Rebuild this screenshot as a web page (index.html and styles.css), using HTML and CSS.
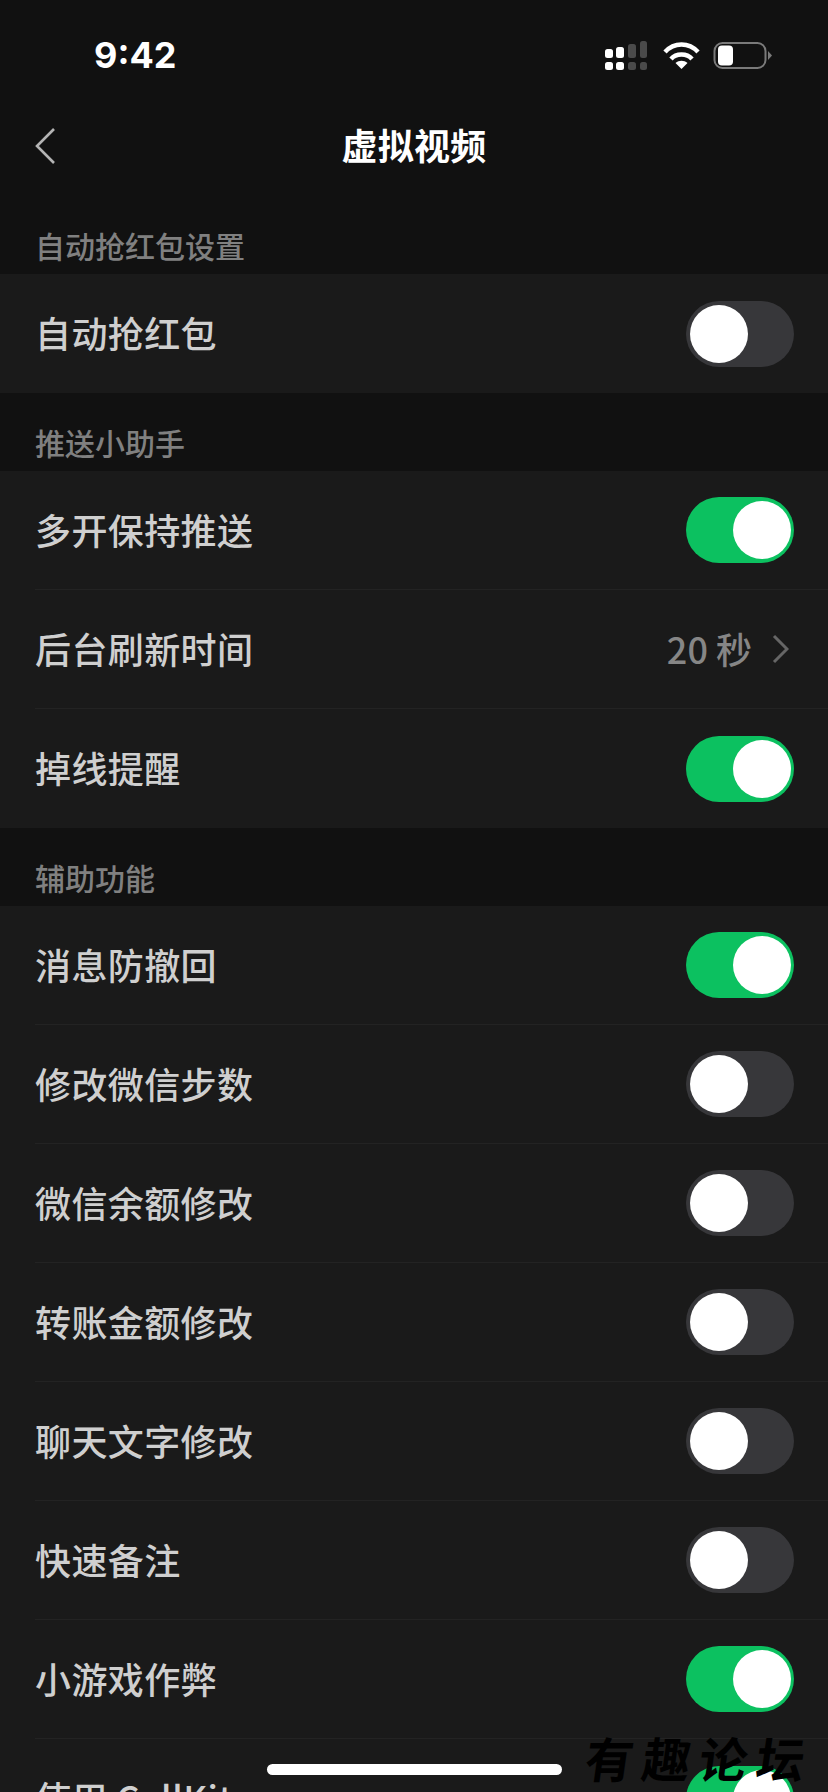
FILE: index.html
```html
<!DOCTYPE html>
<html lang="zh-CN">
<head>
    <meta charset="UTF-8">
    <meta name="viewport" content="width=device-width, initial-scale=1.0">
    <title>虚拟视频</title>
    <link rel="stylesheet" href="styles.css">
</head>
<body>
    <div class="status-bar">
        <span class="time">9:42</span>
        <svg class="status-icons" width="168" height="32" viewBox="0 0 168 32">
            <!-- signal -->
            <g fill="#fff">
                <rect x="1" y="10" width="8" height="9" rx="2.5"/>
                <rect x="12" y="8" width="8" height="11" rx="2.5"/>
                <rect x="1" y="23" width="8" height="8" rx="2.5"/>
                <rect x="12" y="23" width="8" height="8" rx="2.5"/>
            </g>
            <g fill="#4a4a4a">
                <rect x="24" y="5" width="8" height="14" rx="2.5"/>
                <rect x="36" y="2" width="7" height="17" rx="2.5"/>
                <rect x="24" y="23" width="8" height="8" rx="2.5"/>
                <rect x="36" y="23" width="7" height="8" rx="2.5"/>
            </g>
            <!-- wifi -->
            <g fill="none" stroke="#fff" stroke-width="4.4">
                <path d="M61 13 C70 3 85 3 94 13"/>
                <path d="M67 20 C72 14 83 14 88 20"/>
            </g>
            <path d="M71.5 24 C75 21 80 21 83.5 24 L77.5 30 Z" fill="#fff"/>
            <!-- battery -->
            <rect x="110.5" y="4" width="51" height="25" rx="8" fill="none" stroke="#7a7a7a" stroke-width="2"/>
            <rect x="114" y="6.5" width="15" height="20" rx="4" fill="#fff"/>
            <path d="M164 12 L168 16.5 L164 21 Z" fill="#7a7a7a"/>
        </svg>
    </div>

    <div class="nav-bar">
        <svg class="back" width="22" height="38" viewBox="0 0 22 38">
            <path d="M20 2 L3 19 L20 36" fill="none" stroke="#b4b4b4" stroke-width="2.6"/>
        </svg>
        <h1>虚拟视频</h1>
    </div>

    <div class="section-title section-first">自动抢红包设置</div>
    <div class="group">
        <div class="row">
            <span>自动抢红包</span>
            <div class="switch"></div>
        </div>
    </div>

    <div class="section-title">推送小助手</div>
    <div class="group">
        <div class="row">
            <span>多开保持推送</span>
            <div class="switch on"></div>
        </div>
        <div class="row">
            <span>后台刷新时间</span>
            <div class="row-value">
                <span class="value">20 秒</span>
                <svg width="18" height="30" viewBox="0 0 18 30">
                    <path d="M3 2 L16 15 L3 28" fill="none" stroke="#666" stroke-width="3"/>
                </svg>
            </div>
        </div>
        <div class="row">
            <span>掉线提醒</span>
            <div class="switch on"></div>
        </div>
    </div>

    <div class="section-title">辅助功能</div>
    <div class="group">
        <div class="row">
            <span>消息防撤回</span>
            <div class="switch on"></div>
        </div>
        <div class="row">
            <span>修改微信步数</span>
            <div class="switch"></div>
        </div>
        <div class="row">
            <span>微信余额修改</span>
            <div class="switch"></div>
        </div>
        <div class="row">
            <span>转账金额修改</span>
            <div class="switch"></div>
        </div>
        <div class="row">
            <span>聊天文字修改</span>
            <div class="switch"></div>
        </div>
        <div class="row">
            <span>快速备注</span>
            <div class="switch"></div>
        </div>
        <div class="row">
            <span>小游戏作弊</span>
            <div class="switch on"></div>
        </div>
        <div class="row">
            <span>使用 CallKit</span>
            <div class="switch on"></div>
        </div>
    </div>

    <div class="home-bar"></div>
    <div class="watermark">有趣论坛</div>
</body>
</html>
```

FILE: styles.css
```css
html, body {
    margin: 0;
    padding: 0;
}

body {
    position: relative;
    height: 1792px;
    overflow: hidden;
    background-color: #111111;
    color: #cfcfcf;
    font-family: "Noto Sans CJK SC", "Noto Sans", sans-serif;
}

.status-bar {
    height: 88px;
    display: flex;
    align-items: center;
    justify-content: space-between;
    padding: 22px 56px 0 94px;
    box-sizing: border-box;
}

.time {
    color: #fff;
    font-family: Inter, sans-serif;
    font-size: 36px;
    font-weight: 700;
    line-height: 1;
}

.status-icons {
    display: block;
}

.nav-bar {
    position: relative;
    height: 116px;
    box-sizing: border-box;
    padding-bottom: 4px;
    display: flex;
    align-items: center;
    justify-content: center;
}

.nav-bar h1 {
    margin: 0;
    color: #fff;
    font-size: 36px;
    font-weight: 700;
    letter-spacing: 0.3px;
}

.back {
    position: absolute;
    left: 34px;
    top: 39px;
}

.section-title {
    height: 78px;
    box-sizing: border-box;
    padding: 34px 0 14px 35px;
    color: #808080;
    font-size: 30px;
    font-weight: 500;
    line-height: 30px;
}

.section-first {
    height: 70px;
    padding-top: 26px;
}

.group {
    background-color: #1a1a1a;
}

.row {
    height: 119px;
    box-sizing: border-box;
    margin-left: 35px;
    padding-right: 34px;
    display: flex;
    align-items: center;
    justify-content: space-between;
    border-bottom: 1px solid #232323;
    font-size: 36px;
    font-weight: 500;
    letter-spacing: 0.4px;
}

.row > span {
    padding-bottom: 3px;
}

.group .row:last-child {
    border-bottom: none;
}

.row-value {
    display: flex;
    align-items: center;
    gap: 19px;
    padding-right: 5px;
    color: #868686;
}

.value {
    padding-bottom: 3px;
    letter-spacing: 0;
}

.switch {
    position: relative;
    width: 108px;
    height: 66px;
    border-radius: 33px;
    background-color: #37373a;
}

.switch::after {
    content: "";
    position: absolute;
    top: 4px;
    left: 4px;
    width: 58px;
    height: 58px;
    border-radius: 50%;
    background-color: #fff;
}

.switch.on {
    background-color: #0cc160;
}

.switch.on::after {
    left: auto;
    right: 3px;
}

.home-bar {
    position: absolute;
    left: 267px;
    top: 1764px;
    width: 295px;
    height: 11px;
    border-radius: 6px;
    background-color: #fff;
}

.watermark {
    position: absolute;
    left: 586px;
    top: 1730px;
    color: #000;
    font-size: 48px;
    font-weight: 700;
    letter-spacing: 9px;
    line-height: 54px;
    white-space: nowrap;
    transform: skewX(-8deg);
}
```
